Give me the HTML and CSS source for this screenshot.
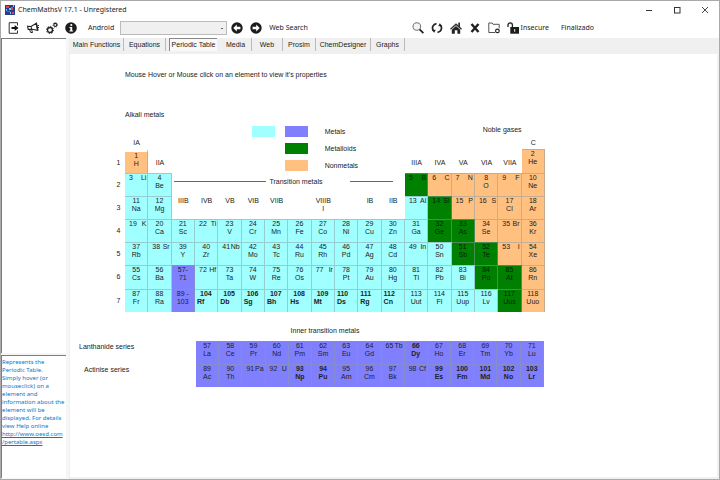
FILE: index.html
```html
<!DOCTYPE html>
<html lang="en">
<head>
<meta charset="utf-8">
<title>ChemMathsV 17.1 - Unregistered</title>
<link rel="stylesheet" href="styles.css">
</head>
<body>
<header class="titlebar">
  <svg class="logo" viewBox="0 0 10 10"><rect width="10" height="10" fill="#23408e"/><path d="M1 1h3v2H1zM6 2h2v3H6zM2 6h3v1H2zM7 7h2v2H7z" fill="#e0454f"/><path d="M4 3h2v2H4zM1 4h1v2H1zM5 7h1v2H5zM8 0h1v2H8z" fill="#8fc3ef"/></svg>
  <h1>ChemMathsV 17.1 - Unregistered</h1>
  <div class="window-buttons">
    <button type="button" aria-label="Minimize"><svg viewBox="0 0 8 8"><path d="M1 4.5h6" stroke="#333" fill="none"/></svg></button>
    <button type="button" aria-label="Maximize"><svg viewBox="0 0 8 8"><rect x="1.5" y="1.5" width="5.5" height="5.5" stroke="#333" fill="none"/></svg></button>
    <button type="button" aria-label="Close"><svg viewBox="0 0 8 8"><path d="M1 1l6 6M7 1l-6 6" stroke="#333" fill="none" stroke-width=".9"/></svg></button>
  </div>
</header>

<div class="toolbar">
  <div class="tools tools-main">
    <button type="button" aria-label="Exit"><svg viewBox="0 0 12 12"><path d="M9.5 3.5V.7H1.2v10.6h8.3V8.5" fill="none" stroke="#333" stroke-width="1"/><path d="M3.5 5h3.2V3l3.8 3-3.8 3V7H3.5z" fill="#111"/></svg></button>
    <button type="button" aria-label="Announcements"><svg viewBox="0 0 12 12"><path d="M.6 4.2 4 4.5 9.5 1.2l1 7L5 7.2l-3.8.2z" fill="none" stroke="#222" stroke-width="1.1"/><path d="M9 1l2 7.5" stroke="#222" stroke-width="1.4"/><path d="M2.5 7.5l1.2 3h1.8L4.5 7.3M4 4.5l.7 2.8M11 3.5h1M11 5.5h1" fill="none" stroke="#222"/></svg></button>
    <button type="button" aria-label="Settings"><svg viewBox="0 0 12 12"><circle cx="4" cy="8" r="2.5" fill="none" stroke="#222" stroke-width="1.4"/><circle cx="4" cy="8" r="3.6" fill="none" stroke="#222" stroke-dasharray="1.2 1.6"/><circle cx="9.3" cy="2.9" r="1.5" fill="none" stroke="#222" stroke-width="1.1"/><circle cx="9.3" cy="2.9" r="2.3" fill="none" stroke="#222" stroke-width=".8" stroke-dasharray=".9 .9"/></svg></button>
    <button type="button" aria-label="Information"><svg viewBox="0 0 12 12"><circle cx="6" cy="6" r="5.8" fill="#1c1c1c"/><circle cx="6.3" cy="3" r="1.1" fill="#fff"/><path d="M4.4 5h2.8v3.6h.9v1H4.4v-1h.9V6h-.9z" fill="#fff"/></svg></button>
  </div>
  <label for="device">Android</label>
  <select id="device"><option></option></select>
  <div class="tools tools-nav">
    <button type="button" aria-label="Back"><svg viewBox="0 0 12 12"><circle cx="6" cy="6" r="5.7" fill="#1c1c1c"/><path d="M5.8 2.6v2.2h3.6v2.4H5.8v2.2L2.3 6z" fill="#fff"/></svg></button>
    <button type="button" aria-label="Forward"><svg viewBox="0 0 12 12"><circle cx="6" cy="6" r="5.7" fill="#1c1c1c"/><path d="M6.2 2.6v2.2H2.6v2.4h3.6v2.2L9.7 6z" fill="#fff"/></svg></button>
  </div>
  <span class="web-search">Web Search</span>
  <div class="tools tools-web">
    <button type="button" aria-label="Search"><svg viewBox="0 0 12 12"><circle cx="4.8" cy="4.5" r="3.8" fill="#f4f4f4" stroke="#777" stroke-width="1.1"/><path d="M7.6 7.3l3.8 3.9" stroke="#222" stroke-width="1.8"/></svg></button>
    <button type="button" aria-label="Refresh"><svg viewBox="0 0 12 12"><path d="M5.5 1.6A4.4 4.4 0 0 0 2.4 8.6M6.5 10.4A4.4 4.4 0 0 0 9.6 3.4" fill="none" stroke="#222" stroke-width="1.7"/><path d="M4.8 7.8 3.2 10.8.8 8zM7.2 4.2 8.8 1.2l2.4 2.8z" fill="#222"/></svg></button>
    <button type="button" aria-label="Home"><svg viewBox="0 0 12 12"><path d="M0 6.8 6 1.3l2.3 2V.6H10v4.2l2 2-.9.9L6 3.2.9 7.7z" fill="#333"/><path d="M1.8 7.7 6 4l4.2 3.7v4H7.4V8.3H4.8v3.4h-3z" fill="#222"/></svg></button>
    <button type="button" aria-label="Stop"><svg viewBox="0 0 12 12"><path d="M2.5 2l7 8M9.5 2l-7 8" stroke="#222" stroke-width="2.4"/></svg></button>
    <button type="button" aria-label="Saved pages"><svg viewBox="0 0 12 12"><path d="M7 10.5H.8V1h3.4l.8 1.3h6.2v4" fill="none" stroke="#555"/><circle cx="9.4" cy="8.9" r="1.8" fill="#fff" stroke="#222" stroke-width="1.2"/></svg></button>
    <button type="button" aria-label="Security"><svg viewBox="0 0 12 12"><path d="M1 5V3a2.2 2.2 0 0 1 4.4 0v2.5" fill="none" stroke="#222" stroke-width="1.3"/><path d="M3.3 5H12v6.7H3.3z" fill="#1c1c1c"/><path d="M7.7 7v2.8" stroke="#eee"/></svg></button>
  </div>
  <span class="secure">Insecure</span>
  <span>Finalizado</span>
</div>

<div class="workspace">
  <aside class="sidebar">
    <div class="pane list-pane"></div>
    <div class="pane help-pane">Represents the<br>Periodic Table.<br>Simply hover (or<br>mouseclick) on a<br>element and<br>information about the<br>element will be<br>displayed. For details<br>view Help online<br><a href="http://www.oesd.com/pertable.aspx">http://www.oesd.com<wbr>/pertable.aspx</a></div>
  </aside>

  <main class="content">
    <nav class="tabs">
      <button type="button">Main Functions</button>
      <button type="button">Equations</button>
      <button type="button" class="selected">Periodic Table</button>
      <button type="button">Media</button>
      <button type="button">Web</button>
      <button type="button">Prosim</button>
      <button type="button">ChemDesigner</button>
      <button type="button">Graphs</button>
    </nav>

    <section class="page">
      <p class="hint">Mouse Hover or Mouse click on an element to view it's properties</p>

      <table class="elements periods">
        <colgroup><col class="period-col"><col span="18"></colgroup>
        <tbody>
          <tr class="family"><td></td><th colspan="4">Alkali metals</th><td colspan="14"></td></tr>
          <tr class="notes"><td></td><td colspan="2"></td>
            <td colspan="10" rowspan="3" class="legend-cell">
              <ul class="legend">
                <li><i class="swatch metal"></i><i class="swatch inner"></i>Metals</li>
                <li><i class="swatch"></i><i class="swatch metalloid"></i>Metalloids</li>
                <li><i class="swatch"></i><i class="swatch nonmetal"></i>Nonmetals</li>
              </ul>
            </td>
            <td colspan="2"></td><th colspan="3" class="noble">Noble gases</th><td></td></tr>
          <tr class="groups"><td></td><th>IA</th><td></td><td colspan="5"></td><th>C</th></tr>
        </tbody>
      </table>
    </section>
  </main>
</div>
<script src="elements.js"></script>
</body>
</html>
```
FILE: elements.js
```js
// Cell notation: kind|number|symbol|style.
// kind: m metal, i inner transition, d metalloid, n nonmetal, t plain label, - empty.
// style: l number and symbol on one line, b bold, h bold with the symbol at the left, k bold, all at the left.
const PERIODS = [
  "n|1|H t|IIA x t|IIIA t|IVA t|VA t|VIA t|VIIA n|2|He",
  "m|3|Li|l m|4|Be y d|5|B|l n|6|C|l n|7|N|l n|8|O n|9|F|l n|10|Ne",
  "m|11|Na m|12|Mg t|IIIB t|IVB t|VB t|VIB t|VIIB - z - t|IB t|IIB m|13|Al|l d|14|Si|l n|15|P|l n|16|S|l n|17|Cl n|18|Ar",
  "m|19|K|l m|20|Ca m|21|Sc m|22|Ti|l m|23|V m|24|Cr m|25|Mn m|26|Fe m|27|Co m|28|Ni m|29|Cu m|30|Zn m|31|Ga d|32|Ge d|33|As n|34|Se n|35|Br|l n|36|Kr",
  "m|37|Rb m|38|Sr|l m|39|Y m|40|Zr m|41|Nb|l m|42|Mo m|43|Tc m|44|Ru m|45|Rh m|46|Pd m|47|Ag m|48|Cd m|49|In|l m|50|Sn d|51|Sb d|52|Te n|53|I|l n|54|Xe",
  "m|55|Cs m|56|Ba i|57-|71 m|72|Hf|l m|73|Ta m|74|W m|75|Re m|76|Os m|77|Ir|l m|78|Pt m|79|Au m|80|Hg m|81|Tl m|82|Pb m|83|Bi d|84|Po d|85|At n|86|Rn",
  "m|87|Fr m|88|Ra i|89_-|103 m|104|Rf|h m|105|Db|h m|106|Sg|h m|107|Bh|h m|108|Hs|h m|109|Mt|h m|110|Ds|k m|111|Rg|k m|112|Cn|k m|113|Uut m|114|Fl m|115|Uup m|116|Lv d|117|Uus n|118|Uuo"
];
const SERIES = [
  ["Lanthanide series", "i|57|La i|58|Ce i|59|Pr i|60|Nd i|61|Pm i|62|Sm i|63|Eu i|64|Gd i|65|Tb|l i|66|Dy|b i|67|Ho i|68|Er i|69|Tm i|70|Yb i|71|Lu"],
  ["Actinise series", "i|89|Ac i|90|Th i|91|Pa|l i|92|U|l i|93|Np|b i|94|Pu|b i|95|Am i|96|Cm i|97|Bk i|98|Cf|l i|99|Es|b i|100|Fm|b i|101|Md|b i|102|No|b i|103|Lr|b"]
];
const KINDS = { m: "metal", i: "inner", d: "metalloid", n: "nonmetal" };
const STYLES = { b: " bold", h: " bold hanging", k: " bold flush" };

function cell(code) {
  if (code === "x") return "";
  if (code === "y") return '<th colspan="10"><span class="transition">Transition metals</span></th>';
  if (code === "z") return "<th>VIIIB<br>I</th>";
  if (code === "-") return "<td></td>";
  const [kind, a, b, style] = code.replace("_", " ").split("|");
  if (kind === "t") return `<th>${a}</th>`;
  if (style === "l") return `<td class="${KINDS[kind]}"><span class="line"><span>${a}</span><span>${b}</span></span></td>`;
  return `<td class="${KINDS[kind]}${STYLES[style] || ""}">${a}<br>${b}</td>`;
}
const cells = (row) => row.split(" ").map(cell).join("");

const body = document.querySelector(".periods tbody");
body.insertAdjacentHTML("beforeend", PERIODS.map((row, i) =>
  `<tr class="period p${i + 1}"><th>${i + 1}</th>${cells(row)}</tr>`).join(""));

document.querySelector(".page").insertAdjacentHTML("beforeend",
  `<table class="elements series"><caption>Inner transition metals</caption>
   <colgroup><col class="series-col"><col span="15"></colgroup><tbody>` +
  SERIES.map(([name, row]) => `<tr class="period"><th>${name}</th>${cells(row)}</tr>`).join("") +
  "</tbody></table>");
```
FILE: styles.css
```css
* { box-sizing: border-box; }

body {
  margin: 0;
  min-height: 100vh;
  display: flex;
  flex-direction: column;
  border: 1px solid #aaa;
  background: #fff;
  color: #222;
  font: 7px/8px "Liberation Sans", sans-serif;
}

button {
  padding: 0;
  border: 0;
  background: none;
  color: inherit;
  font: inherit;
  white-space: nowrap;
}

svg { display: block; }

.titlebar {
  display: flex;
  align-items: center;
  height: 17px;
  padding: 0 10px 0 4px;
  font-family: "Noto Sans", sans-serif;
}
.titlebar h1 {
  flex: 1;
  margin: 0 0 0 3px;
  font-size: 7px;
  font-weight: 400;
}
.logo { width: 10px; height: 10px; }
.window-buttons { display: flex; gap: 20px; }
.window-buttons svg { width: 8px; height: 8px; }

.toolbar {
  display: flex;
  align-items: center;
  height: 20px;
  padding-left: 7px;
  font-family: "Noto Sans", sans-serif;
}
.tools { display: flex; }
.tools svg { width: 12px; height: 12px; }
.tools-main { gap: 7px; margin-right: 11px; }
.tools-nav { gap: 7px; margin: 0 7px 0 4px; }
.tools-web { gap: 7px; margin: 0 2px 0 auto; }
.secure { margin-right: 12px; }
.toolbar span:last-child { margin-right: 125px; }
.toolbar select {
  width: 107px;
  height: 14px;
  margin-left: 6px;
  appearance: none;
  border: 1px solid #bbb;
  background: #f0f0f0 linear-gradient(#666, #666) no-repeat right 3px center / 2px 1px;
  font: inherit;
}

.workspace { flex: 1; display: flex; background: #f0f0f0; }

.sidebar {
  display: flex;
  flex-direction: column;
  gap: 2px;
  width: 68px;
  padding: 0 3px 1px 0;
  background: #f6f6f6;
}
.pane {
  border: solid #7d7d7d;
  border-width: 1px 0 0 1px;
  background: #fff;
}
.list-pane { flex: 317 0 0; }
.help-pane {
  flex: 121 0 0;
  padding-top: 2px;
  color: #0a78c8;
  font-family: "Noto Sans", sans-serif;
  font-size: 6px;
}
.help-pane a { color: inherit; }

.content {
  flex: 1;
  display: flex;
  flex-direction: column;
  min-width: 0;
  padding: 0 2px 2px 1px;
}
.tabs {
  display: grid;
  grid-template-columns: 54px 42px 54px 32px 31px 33px 55px 34px;
  height: 16px;
  padding-bottom: 3px;
}
.tabs button { border-right: 1px solid #bbb; }
.tabs .selected {
  margin: 0 3px;
  border: solid #888;
  border-width: 1px 0 0 1px;
  background: #f9f9f9;
}

.page { flex: 1; padding: 17px 0 0 9px; background: #fff; }
.hint { margin: 0 0 32px 46px; }

.elements {
  table-layout: fixed;
  border-spacing: 0;
  color: #222;
}
.elements th, .elements td {
  padding: 0;
  font-weight: 400;
  vertical-align: top;
  text-align: center;
  white-space: nowrap;
}
.periods { width: 433px; margin-left: 33px; }
.period-col { width: 13px; }
.periods .family { height: 12px; }
.periods .family th { text-align: left; }
.periods .notes { height: 14px; }
.periods .groups { height: 12px; }
.periods .notes th, .periods .groups th { vertical-align: middle; }
.periods .notes th { text-align: right; }
.period { height: 23px; }
.period.p1, .period.p6 { height: 24px; }
.elements .period th { vertical-align: middle; }
.elements .p1 th { padding-top: 4px; }
.elements .p3 td ~ th { vertical-align: top; padding-top: 1px; }

.elements td.metal, .elements td.nonmetal, .elements td.metalloid, .elements td.inner {
  border: solid #8a9aa080;
  border-width: 1px 1px 0 0;
}
.elements .p1 td.nonmetal:nth-child(2) { border-top: 3px solid #fff; }
.metal { background: #a0ffff; }
.nonmetal { background: #ffc080; }
.metalloid { background: #008000; }
.inner { background: #8080ff; }
.elements td.metalloid { color: #052005; }
.elements td.bold { font-weight: 700; }
.elements td.flush, .elements td.hanging { text-align: left; padding-left: 2px; }
.elements td.hanging { text-indent: 3px; }
.line { display: flex; justify-content: space-between; padding: 0 1px 0 4px; }

.legend { margin: 3px 0 0 80px; padding: 0; list-style: none; text-align: left; }
.legend li { display: flex; align-items: center; height: 11px; }
.legend li + li { margin-top: 6px; }
.swatch { width: 23px; height: 11px; margin-right: 10px; }
.swatch + .swatch { margin-right: 17px; }

.transition { display: flex; align-items: center; gap: 3px; padding: 0 12px 6px 2px; }
.transition::before, .transition::after { content: ""; flex: 94; height: 1px; background: #666; }
.transition::after { flex: 43; margin-left: 25px; }

.series { width: 465px; margin-top: 15px; }
.series caption { padding: 0 0 6px 27px; }
.series-col { width: 117px; }
.elements.series th { text-align: left; vertical-align: top; padding-top: 2px; }
.series tr + tr th { padding-left: 5px; }
```
